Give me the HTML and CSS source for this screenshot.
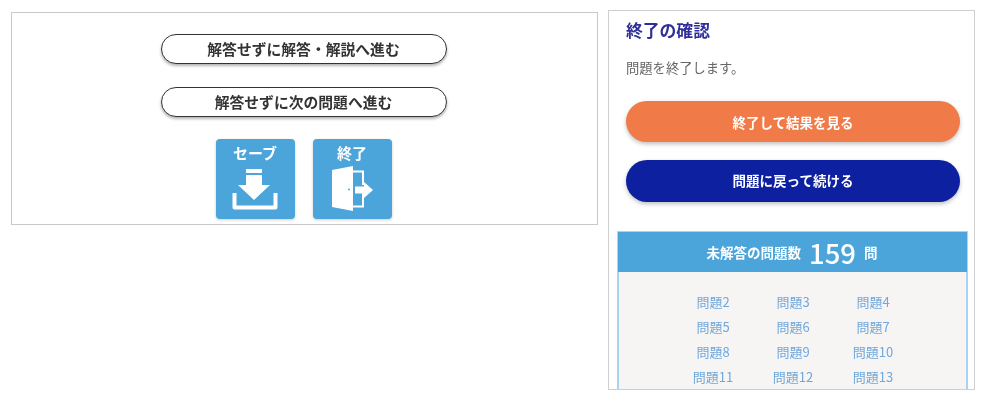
FILE: index.html

```html
<!DOCTYPE html>
<html lang="ja">
<head>
    <meta charset="UTF-8">
    <title>終了の確認</title>
    <link rel="stylesheet" href="styles.css">
</head>
<body>
    <div class="skip-panel">
        <button class="skip-btn">解答せずに解答・解説へ進む</button>
        <button class="skip-btn">解答せずに次の問題へ進む</button>
        <div class="tool-row">
            <div class="tool-btn">
                <span>セーブ</span>
                <svg width="46" height="41" viewBox="0 0 46 41">
                    <path fill="#fff" d="M14 0h16v4H14zM14 6h16v10h8L22 31 6 16h8z"/>
                    <path fill="none" stroke="#fff" stroke-width="4" stroke-linejoin="round" d="M2.500 24v14.500h41V24"/>
                </svg>
            </div>
            <div class="tool-btn">
                <span>終了</span>
                <svg class="door-icon" width="41" height="45" viewBox="0 0 41 45">
                    <path fill="#fff" d="M0 4 21 0v45L0 41z"/>
                    <path fill="none" stroke="#fff" stroke-width="2" d="M21 5.500h10V19M31 27v13.500H21"/>
                    <path fill="#fff" d="M23 20.500h9V16l9 8-9 8v-4.500h-9z"/>
                    <circle cx="17" cy="23.500" r="1" fill="#4ba4da"/>
                </svg>
            </div>
        </div>
    </div>

    <div class="confirm-panel">
        <h2>終了の確認</h2>
        <p>問題を終了します。</p>
        <button class="pill-btn orange">終了して結果を見る</button>
        <button class="pill-btn navy">問題に戻って続ける</button>
        <div class="unanswered">
            <div class="unanswered-head">
                <span>未解答の問題数</span>
                <strong>159</strong>
                <span class="unit">問</span>
            </div>
            <div class="unanswered-list">
                <a>問題2</a><a>問題3</a><a>問題4</a>
                <a>問題5</a><a>問題6</a><a>問題7</a>
                <a>問題8</a><a>問題9</a><a>問題10</a>
                <a>問題11</a><a>問題12</a><a>問題13</a>
            </div>
        </div>
    </div>
</body>
</html>
```

FILE: styles.css

```css
html, body {
    height: 100%;
    overflow: hidden;
}
body {
    margin: 0;
    padding: 10px 15px 0 11px;
    box-sizing: border-box;
    display: flex;
    align-items: flex-start;
    gap: 10px;
    background-color: #ffffff;
    font-family: "Noto Sans CJK JP", "Noto Sans", sans-serif;
}
button {
    font-family: inherit;
    display: block;
    padding: 0;
    cursor: pointer;
}

.skip-panel {
    width: 587px;
    height: 213px;
    margin-top: 2px;
    box-sizing: border-box;
    border: 1px solid #c9c9c9;
    padding: 21px 2px 0 0;
    display: flex;
    flex-direction: column;
    align-items: center;
    filter: blur(0.4px);
}
.skip-btn {
    width: 286px;
    height: 30px;
    margin-bottom: 23px;
    background-color: #fff;
    border: 1.500px solid #333;
    border-radius: 15px;
    box-shadow: 0 2px 3px rgba(0, 0, 0, 0.3);
    color: #333;
    font-size: 14.800px;
    font-weight: 700;
    line-height: 26px;
}
.tool-row {
    display: flex;
    gap: 18px;
    margin-top: -1px;
}
.tool-btn {
    width: 79px;
    height: 80px;
    box-sizing: border-box;
    padding-top: 4px;
    background-color: #4ba4da;
    border-radius: 4px;
    box-shadow: 0 1px 3px rgba(0, 0, 0, 0.2);
    color: #fff;
    font-size: 15px;
    font-weight: 700;
    line-height: 20px;
    display: flex;
    flex-direction: column;
    align-items: center;
    gap: 6px;
}
.door-icon {
    margin-top: -3px;
}

.confirm-panel {
    width: 367px;
    height: 380px;
    box-sizing: border-box;
    border: 1px solid #cfcfcf;
    padding: 0 6px 0 8px;
    overflow: hidden;
    filter: blur(0.5px);
}
.confirm-panel h2 {
    margin: 7px 0 0 9px;
    color: #2f2f9a;
    font-size: 16.800px;
    font-weight: 700;
    line-height: 24px;
}
.confirm-panel p {
    margin: 16px 0 0 9px;
    color: #666;
    font-size: 13.300px;
    line-height: 20px;
}
.pill-btn {
    width: 334px;
    margin-left: 9px;
    border: none;
    border-radius: 21px;
    box-shadow: 0 2px 4px rgba(0, 0, 0, 0.25);
    color: #fff;
    font-size: 13.500px;
    font-weight: 700;
}
.pill-btn.orange {
    height: 41px;
    margin-top: 23px;
    background-color: #f07b48;
}
.pill-btn.navy {
    height: 42px;
    margin-top: 18px;
    padding-bottom: 2px;
    background-color: #0c20a0;
}

.unanswered {
    margin-top: 29px;
    border: solid #a9d3ee;
    border-width: 1px 2px 0;
}
.unanswered-head {
    height: 40px;
    margin: 0 -1px;
    padding-right: 1px;
    background-color: #4ba4da;
    color: #fff;
    font-size: 13.500px;
    font-weight: 700;
    display: flex;
    justify-content: center;
    align-items: center;
    gap: 8px;
}
.unanswered-head strong {
    font-size: 27.500px;
    font-weight: 500;
    line-height: 40px;
}
.unanswered-list {
    background-color: #f7f5f4;
    padding: 17px 0 0 54px;
    display: grid;
    grid-template-columns: repeat(3, 80px);
    grid-auto-rows: 25px;
    justify-content: start;
    justify-items: center;
    color: #6fa8dc;
    font-size: 13px;
    line-height: 25px;
}
```
